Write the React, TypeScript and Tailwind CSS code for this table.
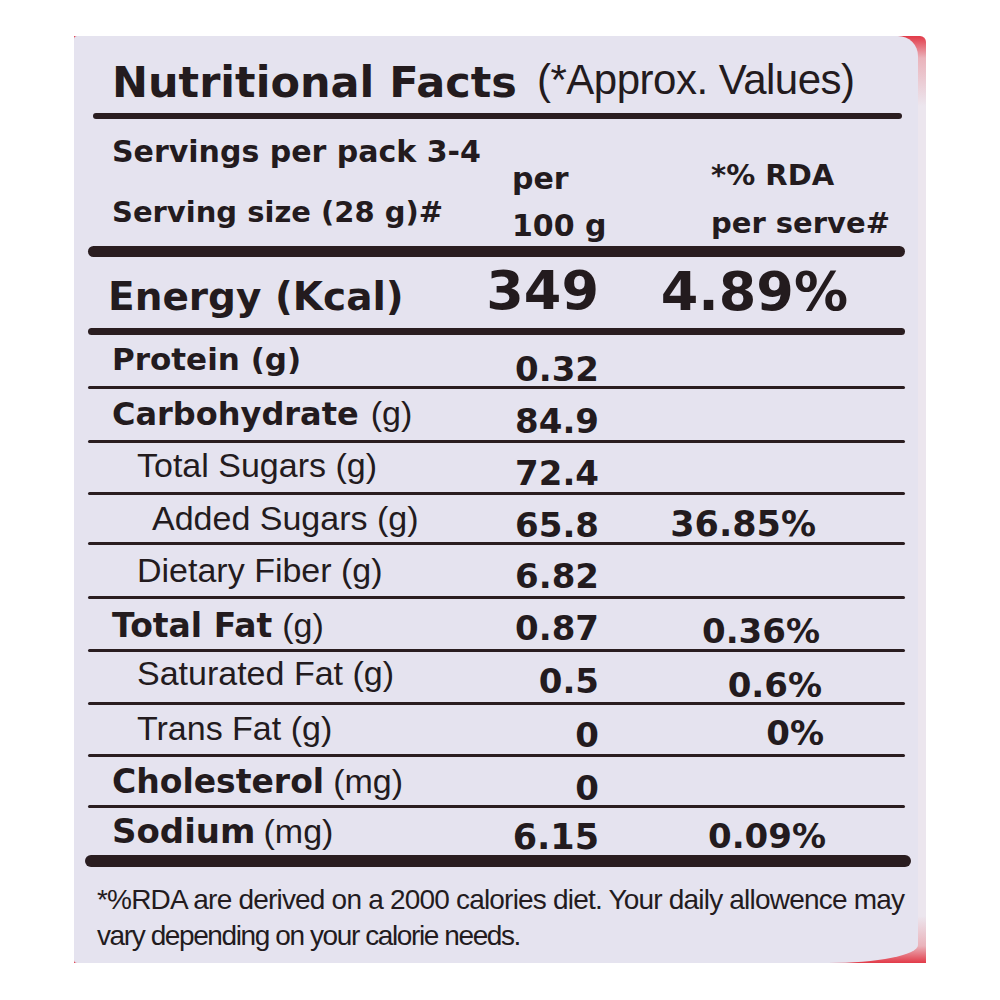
import type { ReactNode } from "react"

const BOLD = "font-['DejaVu_Sans',sans-serif] font-bold"
const REG = "font-['Liberation_Sans',Arial,sans-serif] font-normal"

function Rule({ className }: { className: string }) {
  return <div className={`rounded-full bg-[#2a1d20] ${className}`} />
}

type RowProps = {
  h: string
  label: ReactNode
  labelClass: string
  value: string
  valueClass: string
  rda?: string
  rdaClass?: string
}

function Row({ h, label, labelClass, value, valueClass, rda, rdaClass }: RowProps) {
  return (
    <div className={`flex items-end leading-none ${h}`}>
      <div className={`flex w-[380px] shrink-0 items-baseline ${labelClass}`}>{label}</div>
      <div className={`w-[131px] shrink-0 text-right ${BOLD} ${valueClass}`}>{value}</div>
      {rda && <div className={`shrink-0 text-right ${BOLD} ${rdaClass}`}>{rda}</div>}
    </div>
  )
}

export default function App() {
  return (
    <div className="h-[1000px] w-[1000px] bg-white pl-[74px] pt-[36px] text-[#231b1e]">
      <div className="h-[927px] w-[852px] rounded-tr-[6px] bg-[linear-gradient(180deg,#e23a48_0px,#eab3bb_22px,#ece6ee_70px,#ece6ee_880px,#eab3bb_910px,#e23a48_927px)]">
        <div className="h-full w-[844px] rounded-tl-[3px] rounded-bl-[3px] rounded-tr-[20px] rounded-br-[90px_18px] bg-[#e5e3ef] pl-[14px]">
          <div className="w-[817px]">
            {/* title */}
            <div className="flex h-[77px] items-end pl-[24px] leading-none">
              <div className={`mb-[9px] w-[425px] text-[43px] ${BOLD}`}>Nutritional Facts</div>
              <div className={`mb-[12px] text-[42px] tracking-[-0.5px] ${REG}`}>(*Approx. Values)</div>
            </div>
            <Rule className="ml-[5px] mr-[3px] h-[6px]" />

            {/* serving info */}
            <div className={`flex h-[127px] leading-none ${BOLD}`}>
              <div className="w-[424px] pl-[24px] pt-[18px]">
                <div className="text-[30px]">Servings per pack 3-4</div>
                <div className="mt-[31px] text-[29px]">Serving size (28 g)#</div>
              </div>
              <div className="w-[199px] pt-[45px] text-[30px]">
                <div>per</div>
                <div className="mt-[17px]">100 g</div>
              </div>
              <div className="pt-[42px] text-[29px]">
                <div>*% RDA</div>
                <div className="mt-[19px]">per serve#</div>
              </div>
            </div>
            <Rule className="h-[11px]" />

            <Row
              h="h-[71px]"
              label={<span className={`text-[39px] ${BOLD}`}>Energy (Kcal)</span>}
              labelClass="pl-[20px] mb-[12px]"
              value="349"
              valueClass="mb-[10px] text-[54px]"
              rda="4.89%"
              rdaClass="w-[249px] mb-[9px] text-[54px]"
            />
            <Rule className="h-[7px]" />

            <Row
              h="h-[51px]"
              label={<span className={`text-[31px] ${BOLD}`}>Protein (g)</span>}
              labelClass="pl-[24px] mb-[11px]"
              value="0.32"
              valueClass="mb-[0px] text-[34px]"
            />
            <Rule className="h-[3px]" />

            <Row
              h="h-[51px]"
              label={
                <>
                  <span className={`text-[32px] ${BOLD}`}>Carbohydrate</span>
                  <span className={`ml-[12px] text-[34px] ${REG}`}>(g)</span>
                </>
              }
              labelClass="pl-[24px] mb-[10px]"
              value="84.9"
              valueClass="mb-[2px] text-[34px]"
            />
            <Rule className="h-[3px]" />

            <Row
              h="h-[49px]"
              label={<span className={`text-[34px] ${REG}`}>Total Sugars (g)</span>}
              labelClass="pl-[49px] mb-[10px]"
              value="72.4"
              valueClass="mb-[2px] text-[34px]"
            />
            <Rule className="h-[3px]" />

            <Row
              h="h-[47px]"
              label={<span className={`text-[34px] ${REG}`}>Added Sugars (g)</span>}
              labelClass="pl-[64px] mb-[7px]"
              value="65.8"
              valueClass="mb-[0px] text-[34px]"
              rda="36.85%"
              rdaClass="w-[217px] mb-[0px] text-[35px]"
            />
            <Rule className="h-[3px]" />

            <Row
              h="h-[51px]"
              label={<span className={`text-[34px] ${REG}`}>Dietary Fiber (g)</span>}
              labelClass="pl-[49px] mb-[9px]"
              value="6.82"
              valueClass="mb-[3px] text-[34px]"
            />
            <Rule className="h-[3px]" />

            <Row
              h="h-[50px]"
              label={
                <>
                  <span className={`text-[33px] ${BOLD}`}>Total Fat</span>
                  <span className={`ml-[10px] text-[34px] ${REG}`}>(g)</span>
                </>
              }
              labelClass="pl-[24px] mb-[7px]"
              value="0.87"
              valueClass="mb-[4px] text-[34px]"
              rda="0.36%"
              rdaClass="w-[221px] mb-[1px] text-[34px]"
            />
            <Rule className="h-[3px]" />

            <Row
              h="h-[50px]"
              label={<span className={`text-[34px] ${REG}`}>Saturated Fat (g)</span>}
              labelClass="pl-[49px] mb-[12px]"
              value="0.5"
              valueClass="mb-[4px] text-[34px]"
              rda="0.6%"
              rdaClass="w-[223px] mb-[0px] text-[34px]"
            />
            <Rule className="h-[3px]" />

            <Row
              h="h-[49px]"
              label={<span className={`text-[34px] ${REG}`}>Trans Fat (g)</span>}
              labelClass="pl-[49px] mb-[9px]"
              value="0"
              valueClass="mb-[2px] text-[34px]"
              rda="0%"
              rdaClass="w-[225px] mb-[4px] text-[34px]"
            />
            <Rule className="h-[3px]" />

            <Row
              h="h-[48px]"
              label={
                <>
                  <span className={`text-[33px] ${BOLD}`}>Cholesterol</span>
                  <span className={`ml-[9px] text-[34px] ${REG}`}>(mg)</span>
                </>
              }
              labelClass="pl-[24px] mb-[7px]"
              value="0"
              valueClass="mb-[0px] text-[34px]"
            />
            <Rule className="h-[3px]" />

            <Row
              h="h-[47px]"
              label={
                <>
                  <span className={`text-[34px] ${BOLD}`}>Sodium</span>
                  <span className={`ml-[8px] text-[34px] ${REG}`}>(mg)</span>
                </>
              }
              labelClass="pl-[24px] mb-[7px]"
              value="6.15"
              valueClass="mb-[0px] text-[35px]"
              rda="0.09%"
              rdaClass="w-[227px] mb-[2px] text-[34px]"
            />
            <Rule className="-ml-[3px] -mr-[6px] h-[12px]" />

            {/* footnote */}
            <div className={`pl-[9px] pt-[15px] text-[28px] leading-[36px] ${REG}`}>
              <div className="whitespace-nowrap tracking-[-0.8px]">
                *%RDA are derived on a 2000 calories diet. Your daily allowence may
              </div>
              <div className="whitespace-nowrap tracking-[-1.4px]">vary depending on your calorie needs.</div>
            </div>
          </div>
        </div>
      </div>
    </div>
  )
}
